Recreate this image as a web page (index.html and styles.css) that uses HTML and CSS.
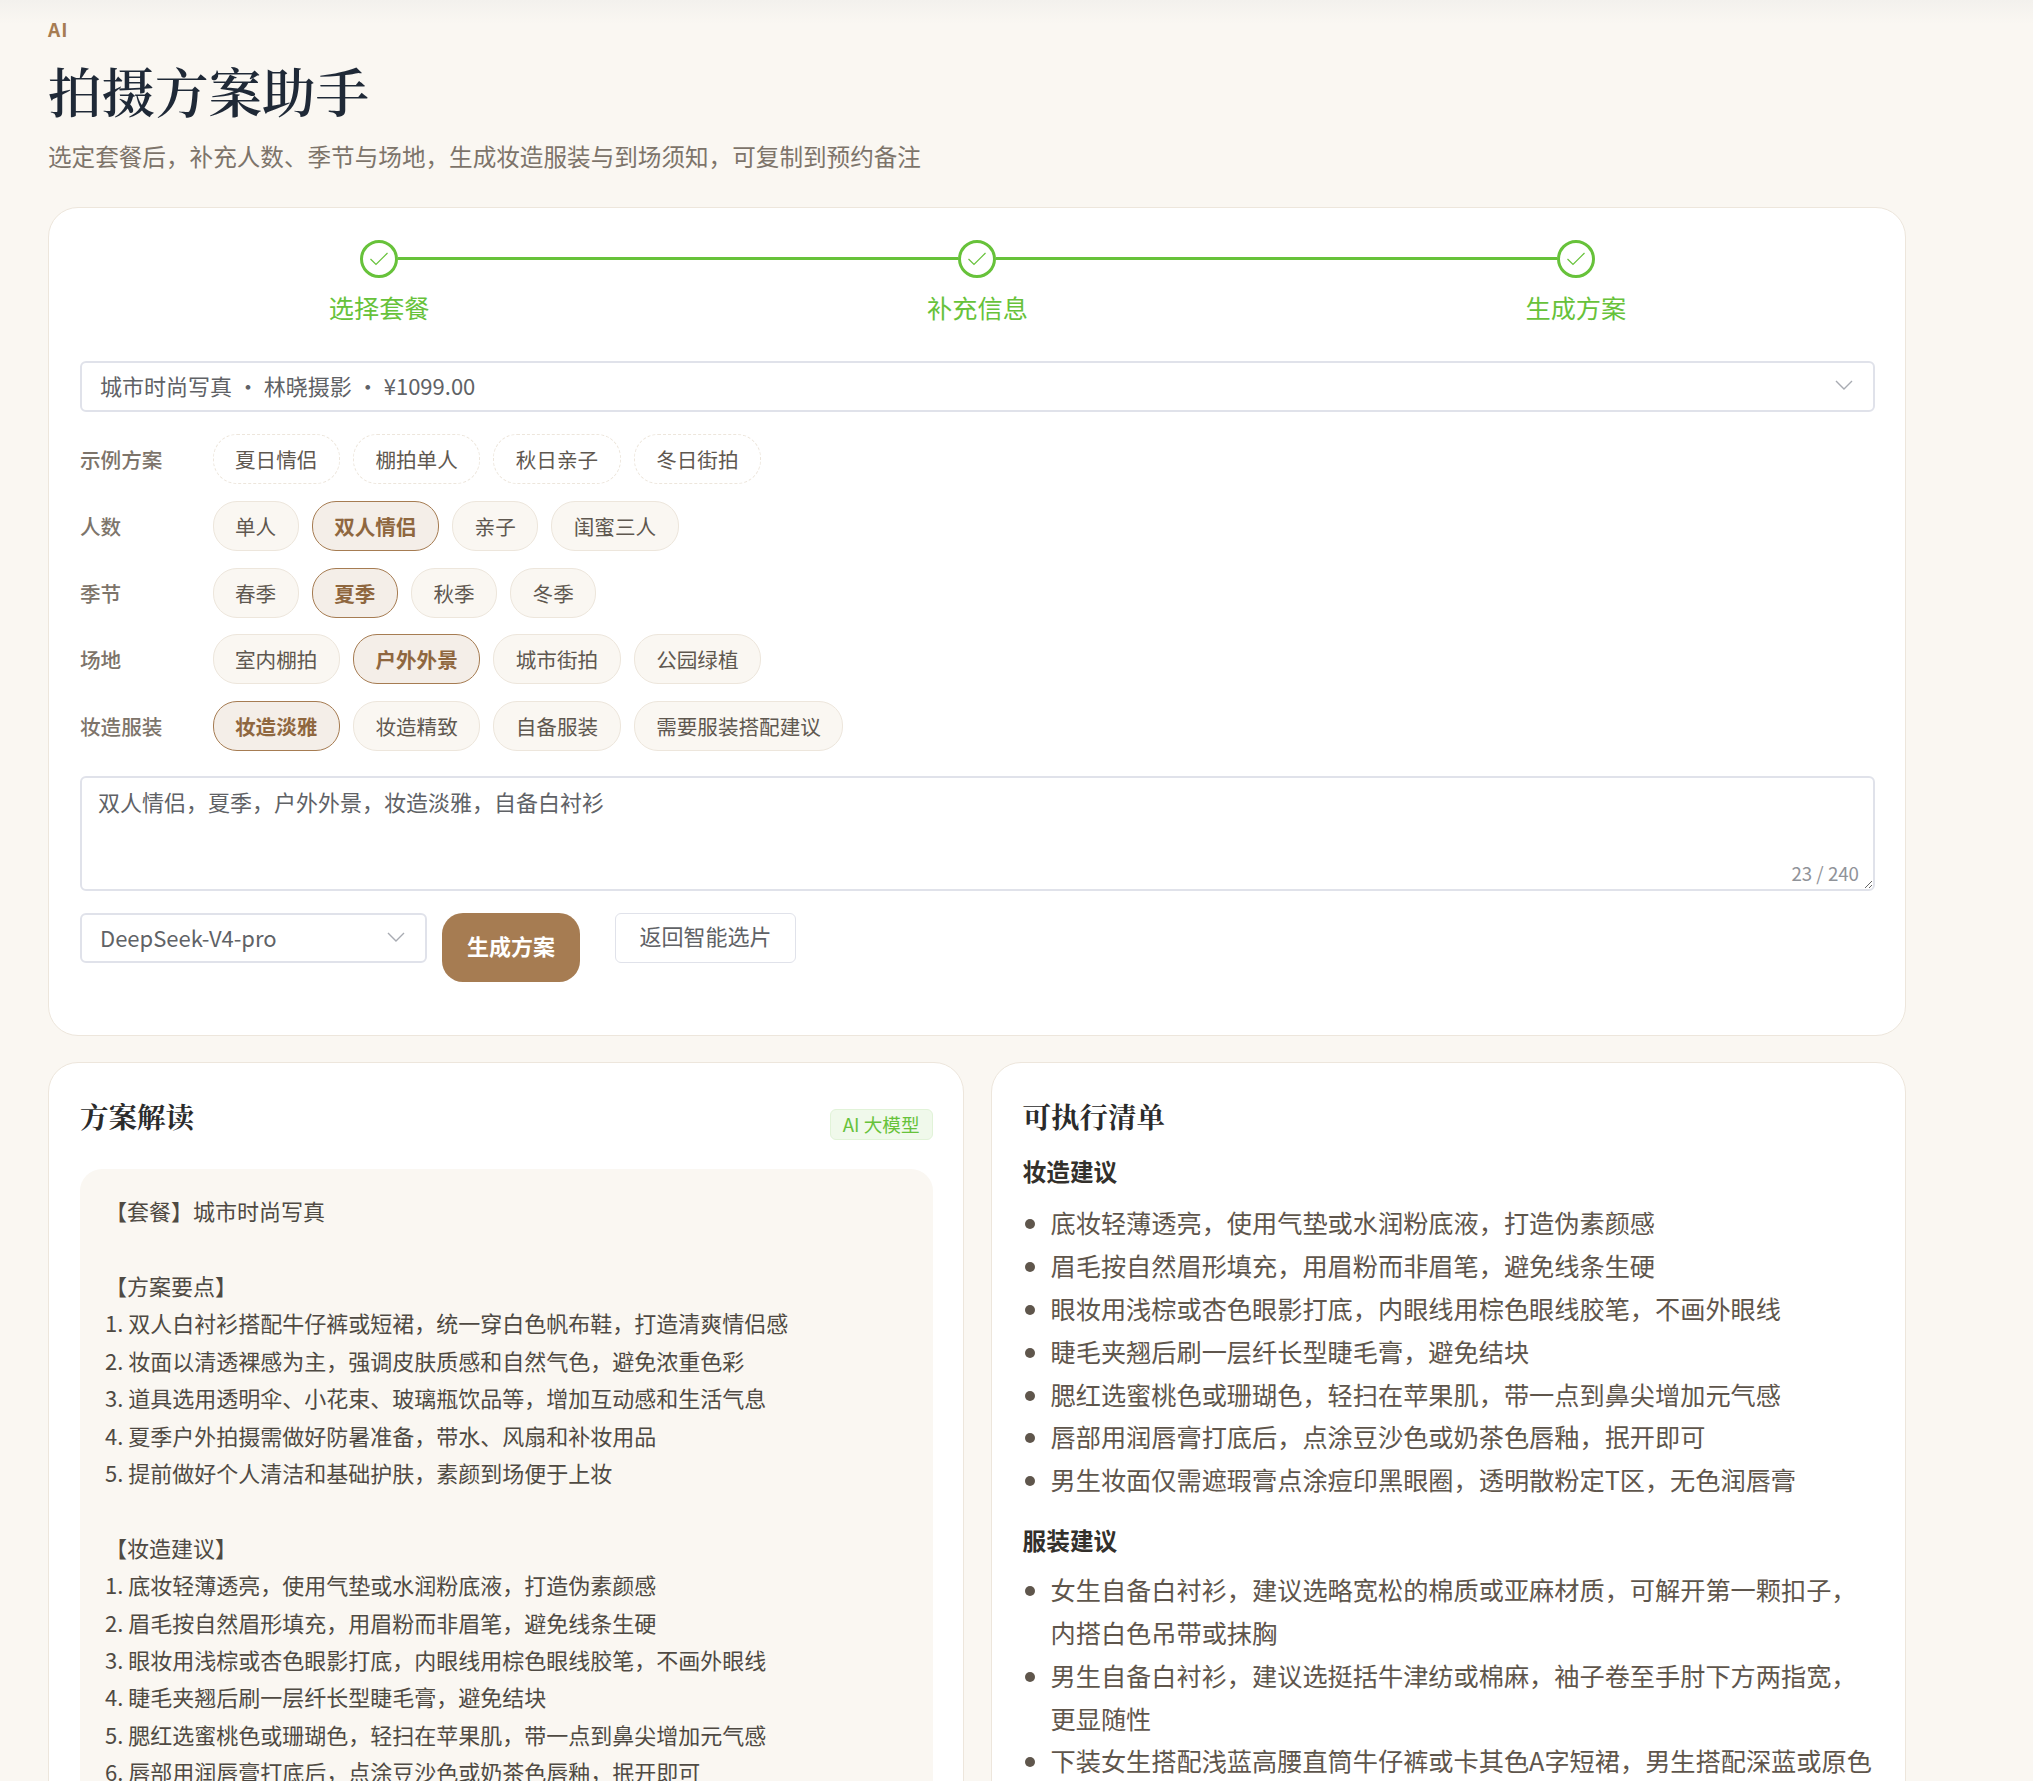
FILE: index.html
```html
<!DOCTYPE html>
<html lang="zh-CN">
<head>
    <meta charset="UTF-8">
    <title>拍摄方案助手</title>
    <link rel="stylesheet" href="styles.css">
</head>
<body>
    <div class="page">
        <header class="page-head">
            <div class="eyebrow">AI</div>
            <h1>拍摄方案助手</h1>
            <p class="subtitle">选定套餐后，补充人数、季节与场地，生成妆造服装与到场须知，可复制到预约备注</p>
        </header>

        <section class="card form-card">
            <div class="steps">
                <div class="step">
                    <span class="step-dot"><svg viewBox="0 0 20 20" width="20" height="20"><path d="M1.5 10 L7 15.5 L18.5 4"/></svg></span>
                    <span class="step-label">选择套餐</span>
                </div>
                <div class="step">
                    <span class="step-dot"><svg viewBox="0 0 20 20" width="20" height="20"><path d="M1.5 10 L7 15.5 L18.5 4"/></svg></span>
                    <span class="step-label">补充信息</span>
                </div>
                <div class="step">
                    <span class="step-dot"><svg viewBox="0 0 20 20" width="20" height="20"><path d="M1.5 10 L7 15.5 L18.5 4"/></svg></span>
                    <span class="step-label">生成方案</span>
                </div>
            </div>

            <div class="select">
                <span>城市时尚写真 ・ 林晓摄影 ・ ¥1099.00</span>
                <svg class="chevron" viewBox="0 0 18 10" width="18" height="10"><path d="M1 1 L9 9 L17 1"/></svg>
            </div>

            <div class="field-row first-row">
                <span class="field-label">示例方案</span>
                <div class="pills">
                    <button class="pill dashed">夏日情侣</button>
                    <button class="pill dashed">棚拍单人</button>
                    <button class="pill dashed">秋日亲子</button>
                    <button class="pill dashed">冬日街拍</button>
                </div>
            </div>
            <div class="field-row">
                <span class="field-label">人数</span>
                <div class="pills">
                    <button class="pill">单人</button>
                    <button class="pill active">双人情侣</button>
                    <button class="pill">亲子</button>
                    <button class="pill">闺蜜三人</button>
                </div>
            </div>
            <div class="field-row">
                <span class="field-label">季节</span>
                <div class="pills">
                    <button class="pill">春季</button>
                    <button class="pill active">夏季</button>
                    <button class="pill">秋季</button>
                    <button class="pill">冬季</button>
                </div>
            </div>
            <div class="field-row">
                <span class="field-label">场地</span>
                <div class="pills">
                    <button class="pill">室内棚拍</button>
                    <button class="pill active">户外外景</button>
                    <button class="pill">城市街拍</button>
                    <button class="pill">公园绿植</button>
                </div>
            </div>
            <div class="field-row">
                <span class="field-label">妆造服装</span>
                <div class="pills">
                    <button class="pill active">妆造淡雅</button>
                    <button class="pill">妆造精致</button>
                    <button class="pill">自备服装</button>
                    <button class="pill">需要服装搭配建议</button>
                </div>
            </div>

            <div class="note-box">
                <textarea class="note">双人情侣，夏季，户外外景，妆造淡雅，自备白衬衫</textarea>
                <span class="note-count">23 / 240</span>
            </div>

            <div class="actions">
                <div class="select model-select">
                    <span>DeepSeek-V4-pro</span>
                    <svg class="chevron" viewBox="0 0 18 10" width="18" height="10"><path d="M1 1 L9 9 L17 1"/></svg>
                </div>
                <button class="btn-primary">生成方案</button>
                <button class="btn-plain">返回智能选片</button>
            </div>
        </section>

        <div class="result-grid">
            <section class="card result-card">
                <div class="card-head">
                    <h2>方案解读</h2>
                    <span class="tag">AI 大模型</span>
                </div>
                <div class="plan-text">【套餐】城市时尚写真

【方案要点】
1. 双人白衬衫搭配牛仔裤或短裙，统一穿白色帆布鞋，打造清爽情侣感
2. 妆面以清透裸感为主，强调皮肤质感和自然气色，避免浓重色彩
3. 道具选用透明伞、小花束、玻璃瓶饮品等，增加互动感和生活气息
4. 夏季户外拍摄需做好防暑准备，带水、风扇和补妆用品
5. 提前做好个人清洁和基础护肤，素颜到场便于上妆

【妆造建议】
1. 底妆轻薄透亮，使用气垫或水润粉底液，打造伪素颜感
2. 眉毛按自然眉形填充，用眉粉而非眉笔，避免线条生硬
3. 眼妆用浅棕或杏色眼影打底，内眼线用棕色眼线胶笔，不画外眼线
4. 睫毛夹翘后刷一层纤长型睫毛膏，避免结块
5. 腮红选蜜桃色或珊瑚色，轻扫在苹果肌，带一点到鼻尖增加元气感
6. 唇部用润唇膏打底后，点涂豆沙色或奶茶色唇釉，抿开即可</div>
            </section>

            <section class="card result-card">
                <h2>可执行清单</h2>
                <h3>妆造建议</h3>
                <ul class="checklist">
                    <li>底妆轻薄透亮，使用气垫或水润粉底液，打造伪素颜感</li>
                    <li>眉毛按自然眉形填充，用眉粉而非眉笔，避免线条生硬</li>
                    <li>眼妆用浅棕或杏色眼影打底，内眼线用棕色眼线胶笔，不画外眼线</li>
                    <li>睫毛夹翘后刷一层纤长型睫毛膏，避免结块</li>
                    <li>腮红选蜜桃色或珊瑚色，轻扫在苹果肌，带一点到鼻尖增加元气感</li>
                    <li>唇部用润唇膏打底后，点涂豆沙色或奶茶色唇釉，抿开即可</li>
                    <li>男生妆面仅需遮瑕膏点涂痘印黑眼圈，透明散粉定T区，无色润唇膏</li>
                </ul>
                <h3>服装建议</h3>
                <ul class="checklist">
                    <li>女生自备白衬衫，建议选略宽松的棉质或亚麻材质，可解开第一颗扣子，内搭白色吊带或抹胸</li>
                    <li>男生自备白衬衫，建议选挺括牛津纺或棉麻，袖子卷至手肘下方两指宽，更显随性</li>
                    <li>下装女生搭配浅蓝高腰直筒牛仔裤或卡其色A字短裙，男生搭配深蓝或原色直筒牛仔裤</li>
                </ul>
            </section>
        </div>
    </div>
</body>
</html>
```

FILE: styles.css
```css
:root {
    --background: #FAF7F2;
    --line: #EDE6DC;
    --brown: #A67C52;
    --green: #67C23A;
    --input-line: #E0E2EA;
    --text: #606266;
    --muted: #7D746A;
    --dark: #1F2937;
}

* {
    margin: 0;
    padding: 0;
    box-sizing: border-box;
}

html, body {
    height: 100%;
    overflow: hidden;
}

body {
    background: linear-gradient(180deg, #F3F1ED 0, var(--background) 24px);
    color: var(--text);
    font-family: "Noto Sans CJK SC", "Noto Sans", sans-serif;
    font-size: 22px;
}

.page {
    width: 1906px;
    padding: 17px 0 0 48px;
}

.eyebrow {
    color: var(--brown);
    font-size: 19px;
    font-weight: 700;
    letter-spacing: 1px;
    line-height: 24px;
}

h1 {
    margin-top: 13px;
    color: var(--dark);
    font-family: "Noto Serif CJK SC", "Liberation Serif", serif;
    font-size: 53.5px;
    font-weight: 600;
    line-height: 72px;
}

.subtitle {
    margin-top: 11.5px;
    color: var(--muted);
    font-size: 23.6px;
    line-height: 36px;
}

.card {
    background: #FFFFFF;
    border: 1.5px solid var(--line);
    border-radius: 30px;
    padding: 31.5px 30px 30px 31px;
}

.form-card {
    margin-top: 33.6px;
    height: 829px;
}

.steps {
    display: flex;
    height: 121px;
}

.step {
    flex: 1;
    display: flex;
    flex-direction: column;
    align-items: center;
    position: relative;
}

.step:not(:last-child)::after {
    content: "";
    position: absolute;
    top: 17px;
    left: calc(50% + 19px);
    width: calc(100% - 38px);
    height: 3px;
    background: var(--green);
}

.step-dot {
    width: 38px;
    height: 38px;
    border: 3px solid var(--green);
    border-radius: 50%;
    background: #FFFFFF;
    display: flex;
    align-items: center;
    justify-content: center;
}

.step-dot svg {
    fill: none;
    stroke: var(--green);
    stroke-width: 1.2;
}

.step-label {
    margin-top: 11px;
    color: var(--green);
    font-size: 25.2px;
    line-height: 36px;
}

.select {
    height: 51px;
    border: 2px solid var(--input-line);
    border-radius: 6px;
    background: #FFFFFF;
    padding: 0 20px 2px 18px;
    display: flex;
    align-items: center;
    justify-content: space-between;
    color: var(--text);
    line-height: 1;
}

.chevron {
    fill: none;
    stroke: #A8ABB2;
    stroke-width: 1.4;
}

.field-row {
    display: flex;
    align-items: center;
    margin-top: 16.6px;
}

.first-row {
    margin-top: 22.8px;
}

.field-label {
    width: 132.5px;
    flex: none;
    color: var(--muted);
    font-size: 20.6px;
    font-weight: 500;
}

.pills {
    display: flex;
    gap: 13px;
}

.pill {
    height: 50px;
    padding: 0 21.5px;
    border: 1.5px solid var(--line);
    border-radius: 24px;
    background: var(--background);
    color: #5F5850;
    font-family: inherit;
    font-size: 20.6px;
}

.pill.dashed {
    background: #FFFFFF;
    border-style: dashed;
}

.pill.active {
    background: #F4EEE8;
    border-color: var(--brown);
    color: #8F673F;
    font-weight: 700;
}

.note-box {
    position: relative;
    margin-top: 25.4px;
    height: 115px;
}

.note {
    display: block;
    width: 100%;
    height: 100%;
    border: 2px solid var(--input-line);
    border-radius: 6px;
    padding: 7px 16px;
    color: var(--text);
    font-family: inherit;
    font-size: 22px;
    line-height: 32px;
    resize: vertical;
    outline: none;
}

.note-count {
    position: absolute;
    right: 16px;
    bottom: 5px;
    color: #909399;
    font-size: 18.7px;
}

.actions {
    display: flex;
    align-items: flex-start;
    margin-top: 22px;
}

.model-select {
    width: 347px;
    height: 50px;
}

.btn-primary {
    width: 138px;
    height: 69px;
    margin-left: 15px;
    padding-bottom: 6px;
    border: none;
    border-radius: 21px;
    background: var(--brown);
    color: #FFFFFF;
    font-family: inherit;
    font-size: 22px;
    font-weight: 700;
}

.btn-plain {
    height: 50px;
    margin-left: 35px;
    padding: 0 23.5px 6px;
    border: 1.5px solid var(--input-line);
    border-radius: 6px;
    background: #FFFFFF;
    color: var(--text);
    font-family: inherit;
    font-size: 22px;
}

.result-grid {
    display: grid;
    grid-template-columns: 1fr 1fr;
    gap: 27px;
    margin-top: 25.6px;
}

.result-card {
    height: 900px;
    padding-top: 30px;
}

.card-head {
    display: flex;
    justify-content: space-between;
    align-items: flex-start;
}

h2 {
    color: #2B2B2B;
    font-family: "Noto Serif CJK SC", "Liberation Serif", serif;
    font-size: 28.5px;
    font-weight: 700;
    line-height: 46px;
}

.tag {
    margin-top: 16px;
    height: 31px;
    padding: 0 12px;
    border: 1.5px solid #E1F3D8;
    border-radius: 6px;
    background: #F0F9EB;
    color: var(--green);
    font-size: 18.6px;
    line-height: 28px;
}

.plan-text {
    margin-top: 29.5px;
    min-height: 700px;
    padding: 23px 25px;
    border-radius: 22px;
    background: var(--background);
    color: #4F4A43;
    font-size: 22px;
    line-height: 37.4px;
    white-space: pre-wrap;
}

h3 {
    margin-top: 12px;
    color: #33302B;
    font-size: 23.7px;
    font-weight: 700;
    line-height: 40px;
}

.checklist {
    margin: 10.5px 0 18.5px;
    padding-left: 28px;
    color: #5F564C;
    font-size: 25.2px;
    line-height: 42.84px;
}

.checklist + h3 {
    margin-top: 0;
}

.checklist + h3 + .checklist {
    margin-top: 8.5px;
}
```
